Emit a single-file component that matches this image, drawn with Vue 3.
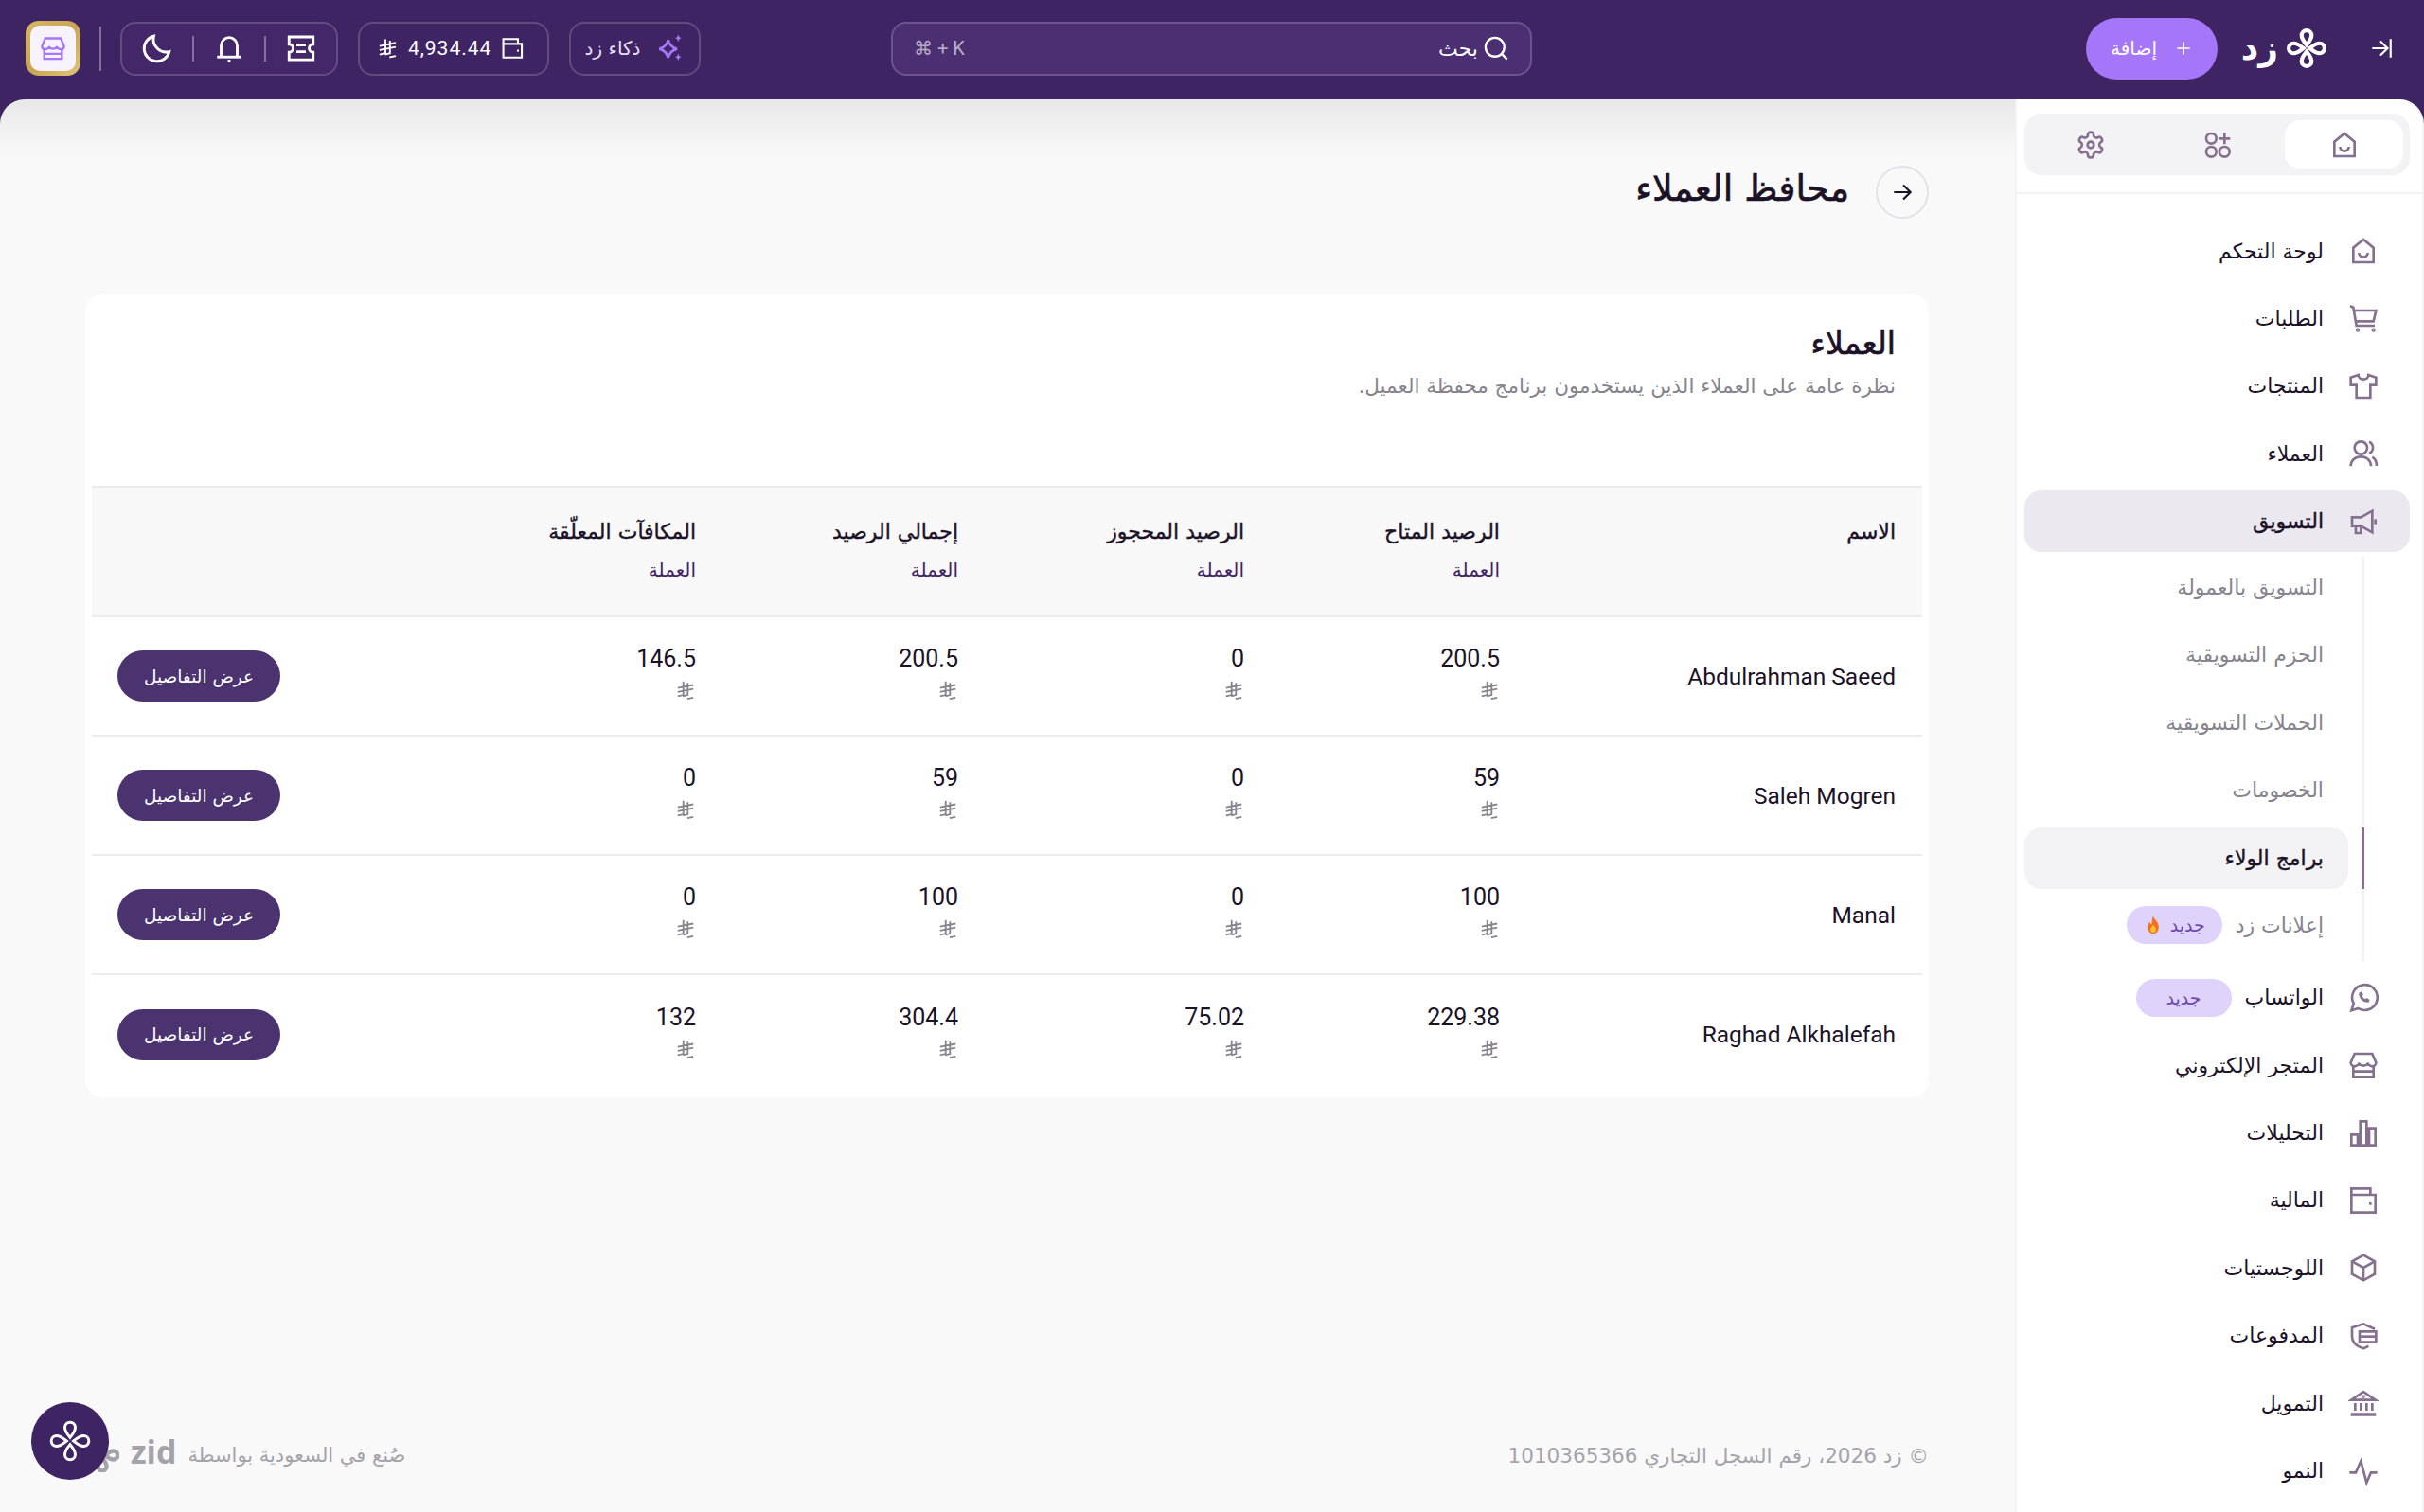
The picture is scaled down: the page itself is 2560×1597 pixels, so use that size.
<template>
  <div class="app" dir="rtl">
    <header class="topbar">
      <div class="brand">
        <svg class="collapse" viewBox="0 0 24 24"><path d="M21 3v18M3 12h14M11 5l7 7-7 7" /></svg>
        <svg class="flower" viewBox="-12 -12 24 24" v-html="flower"></svg>
        <span class="brand-name">زد</span>
        <button class="add-btn">
          <svg viewBox="0 0 24 24"><path d="M12 4v16M4 12h16" /></svg>
          <span>إضافة</span>
        </button>
      </div>

      <div class="search">
        <svg viewBox="0 0 24 24"><circle cx="11" cy="11" r="8.500" /><path d="M17.500 17.500 22 22" /></svg>
        <span class="search-label">بحث</span>
        <span class="shortcut" dir="ltr">⌘ + K</span>
      </div>

      <div class="tools">
        <div class="chip ai">
          <svg viewBox="0 0 24 24" v-html="icons.sparkles"></svg>
          <span>ذكاء زد</span>
        </div>
        <div class="chip balance">
          <svg class="wallet" viewBox="0 0 24 24" v-html="icons.wallet"></svg>
          <span class="amount">4,934.44</span>
          <svg class="sar" viewBox="0 0 24 24" v-html="sar"></svg>
        </div>
        <div class="chip quick">
          <svg viewBox="0 0 24 24" v-html="icons.ticket"></svg>
          <i></i>
          <svg viewBox="0 0 24 24" v-html="icons.bell"></svg>
          <i></i>
          <svg viewBox="0 0 24 24" v-html="icons.moon"></svg>
        </div>
        <span class="tool-sep"></span>
        <div class="store-btn">
          <span><svg viewBox="0 0 24 24" v-html="icons.store"></svg></span>
        </div>
      </div>
    </header>

    <div class="body">
      <aside class="sidebar">
        <div class="tabs-wrap">
          <div class="tabs">
            <button class="tab active"><svg viewBox="0 0 24 24" v-html="icons.home"></svg></button>
            <button class="tab"><svg viewBox="0 0 24 24" v-html="icons.apps"></svg></button>
            <button class="tab"><svg viewBox="0 0 24 24" v-html="icons.gear"></svg></button>
          </div>
        </div>

        <nav class="nav">
          <template v-for="item in nav" :key="item.label">
            <a class="nav-item" :class="{ open: item.sub }">
              <svg viewBox="0 0 24 24" v-html="icons[item.icon]"></svg>
              <span>{{ item.label }}</span>
              <em v-if="item.badge" class="badge wa">{{ item.badge }}</em>
            </a>
            <div v-if="item.sub" class="sub">
              <a v-for="s in item.sub" :key="s.label" class="sub-item" :class="{ active: s.active }">
                <span>{{ s.label }}</span>
                <em v-if="s.badge" class="badge">
                  {{ s.badge }}
                  <svg class="fire" viewBox="0 0 24 24">
                    <path fill="#f4701c" d="M12 1c1 4 7 7 7 14a7 8 0 0 1-14 0c0-3 1-5 3-7 0 2 1 3 2 3 1-3 0-7 2-10z" />
                    <path fill="#fbc531" d="M12 11c.5 2 3.500 4 3.500 6.500a3.500 4 0 0 1-7 0c0-2.500 3-4 3.500-6.500z" />
                  </svg>
                </em>
              </a>
            </div>
          </template>
        </nav>
      </aside>

      <main class="main">
        <div class="page-head">
          <button class="back">
            <svg viewBox="0 0 24 24"><path d="M4 12h16M13 5l7 7-7 7" /></svg>
          </button>
          <h1>محافظ العملاء</h1>
        </div>

        <section class="card">
          <div class="card-head">
            <h2>العملاء</h2>
            <p>نظرة عامة على العملاء الذين يستخدمون برنامج محفظة العميل.</p>
          </div>
          <table>
            <colgroup>
              <col style="width: 418px" />
              <col style="width: 270px" />
              <col style="width: 302px" />
              <col style="width: 277px" />
              <col style="width: 280px" />
              <col />
            </colgroup>
            <thead>
              <tr>
                <th class="name-th">الاسم</th>
                <th v-for="c in columns" :key="c">{{ c }}<small>العملة</small></th>
                <th></th>
              </tr>
            </thead>
            <tbody>
              <tr v-for="row in rows" :key="row.name">
                <td class="name">{{ row.name }}</td>
                <td v-for="(v, i) in row.values" :key="i" class="amount-cell">
                  <div class="val">{{ v }}</div>
                  <svg class="sar" viewBox="0 0 24 24" v-html="sar"></svg>
                </td>
                <td class="action"><button class="details">عرض التفاصيل</button></td>
              </tr>
            </tbody>
          </table>
        </section>

        <footer class="foot">
          <span class="copy">© زد 2026، رقم السجل التجاري 1010365366</span>
          <span class="made">
            صُنع في السعودية بواسطة
            <b dir="ltr">zid</b>
            <svg class="made-logo" viewBox="-12 -12 24 24" v-html="flower"></svg>
          </span>
        </footer>
        <button class="fab"><svg viewBox="-12 -12 24 24" v-html="flower"></svg></button>
      </main>
    </div>
  </div>
</template>

<script setup>
// petal repeated 4 times around the centre
const petal = 'M0-2C-1.200-3.500-3-5.500-3-7.800a3 3 0 0 1 6 0C3-5.500 1.200-3.500 0-2z'
const flower = [0, 90, 180, 270]
  .map((r) => `<path d="${petal}" transform="rotate(${r})" />`)
  .join('')

const sar = '<path d="M9.500 2v15.500L3 19M14.500 3.500v14L9 19M3 9.500l18-3.500M3 14l18-3.500M14 22l7-1.500" />'

const icons = {
  home: '<path d="M4 21V9.500L12 3l8 6.500V21z"/><path d="M8.500 13.500a3.500 3.500 0 0 0 7 0"/>',
  apps: '<circle cx="7" cy="7" r="4"/><circle cx="7" cy="17.500" r="4"/><circle cx="17.500" cy="17.500" r="4"/><path d="M17.500 2.500v9M13 7h9"/>',
  gear: '<path d="M12.220 2h-.44a2 2 0 0 0-2 2v.18a2 2 0 0 1-1 1.730l-.43.25a2 2 0 0 1-2 0l-.15-.08a2 2 0 0 0-2.730.73l-.22.38a2 2 0 0 0 .73 2.730l.15.1a2 2 0 0 1 1 1.720v.51a2 2 0 0 1-1 1.740l-.15.09a2 2 0 0 0-.73 2.730l.22.38a2 2 0 0 0 2.730.73l.15-.08a2 2 0 0 1 2 0l.43.25a2 2 0 0 1 1 1.730V20a2 2 0 0 0 2 2h.44a2 2 0 0 0 2-2v-.18a2 2 0 0 1 1-1.730l.43-.25a2 2 0 0 1 2 0l.15.08a2 2 0 0 0 2.730-.73l.22-.39a2 2 0 0 0-.73-2.730l-.15-.08a2 2 0 0 1-1-1.740v-.5a2 2 0 0 1 1-1.740l.15-.09a2 2 0 0 0 .73-2.730l-.22-.38a2 2 0 0 0-2.730-.73l-.15.08a2 2 0 0 1-2 0l-.43-.25a2 2 0 0 1-1-1.730V4a2 2 0 0 0-2-2z"/><circle cx="12" cy="12" r="2.500"/>',
  cart: '<path d="M1.500 2.500 4 3.500l2.500 14.500H21"/><path d="M5 6h17l-2 8.500H6.500"/><circle cx="7.500" cy="21.500" r=".6"/><circle cx="20" cy="21.500" r=".6"/>',
  shirt: '<path d="M8 3 2 5v6h4.500v10h11V11H22V5l-6-2c0 2-1.500 3.500-4 3.500S8 5 8 3z"/>',
  users: '<circle cx="10" cy="7.500" r="5"/><path d="M2 22c0-4.500 3.500-7.500 8-7.500s8 3 8 7.500"/><path d="M16.500 2.800a5 5 0 0 1 0 9.200"/><path d="M19 14.800c2 1 3.500 3.500 3.500 7"/>',
  megaphone: '<path d="M3 8.500h7l9-5v17l-9-5H3z"/><path d="M6 15.500V21h4v-5.500"/><path d="M21.500 10v4"/>',
  whatsapp: '<path d="M2.500 22l1.800-5.500A10 10 0 1 1 8 20.300z"/><path d="M8.500 8c-.5 4 3.500 8 7.500 7.500l1-2-2.500-1.500-1 1c-1-.5-2-1.500-2.500-2.500l1-1L10.500 7z" fill="currentColor" stroke="none"/>',
  store: '<path d="M5 3h14l3 7c0 2-1.500 3-3 3s-2.500-1-3.500-2c-1 1-2 1.500-3.500 1.500S9.500 12 8.500 11c-1 1-2 2-3.500 2s-3-1-3-3z"/><path d="M4 13v8.500h16V13M4 17h16"/>',
  bars: '<path d="M2.500 13h5v8.500h-5zM9.500 2.500h5v19h-5zM16.500 8h5v13.500h-5z"/>',
  wallet: '<path d="M2.500 7.500h19v14h-19z"/><path d="M2.500 7.500v-5h15v5"/><path d="M16.500 14.500h2"/>',
  box: '<path d="M12 2 21 7v10l-9 5-9-5V7z"/><path d="M3 7l9 5 9-5M12 12v10"/>',
  payments: '<path d="M21 6.500 12 2.500 3 5.500v7c0 4 3 7.500 9 9.500 1.500-.5 3-1.300 4-2"/><path d="M9 8.500h13v8.500H9z"/><path d="M9 12.500h13"/>',
  bank: '<path d="M2.500 9.500 12 3l9.500 6.500z"/><path d="M5.500 12v6M10 12v6M14.500 12v6M19 12v6"/><path d="M2 21h20" stroke-width="2.600"/><circle cx="12" cy="6.800" r=".4"/>',
  activity: '<path d="M1 13h5l4-9 4.500 17 3.500-8h5"/>',
  moon: '<path d="M21 14.500A9.500 9.500 0 0 1 9.500 3a9.500 9.500 0 1 0 11.500 11.500z"/>',
  bell: '<path d="M6 18V10a6 6 0 0 1 12 0v8"/><path d="M3 18.500h18"/><path d="M11 21.500h2"/>',
  ticket: '<path d="M3 3.500h18v5.500a3 3 0 0 0 0 6v5.500H3V15a3 3 0 0 0 0-6z"/><path d="M8.500 9.500h7M8.500 14.500h7"/>',
  sparkles: '<path d="M11 5.500c1 4 3 6 7 7-4 1-6 3-7 7-1-4-3-6-7-7 4-1 6-3 7-7z"/><path fill="currentColor" stroke="none" d="M19 1c.4 1.800 1 2.500 2.500 3-1.500.5-2.100 1.200-2.500 3-.4-1.800-1-2.500-2.500-3 1.500-.5 2.100-1.200 2.500-3zM19 16c.4 1.800 1 2.500 2.500 3-1.500.5-2.100 1.200-2.500 3-.4-1.800-1-2.500-2.500-3 1.500-.5 2.100-1.200 2.500-3z"/>',
}

const nav = [
  { label: 'لوحة التحكم', icon: 'home' },
  { label: 'الطلبات', icon: 'cart' },
  { label: 'المنتجات', icon: 'shirt' },
  { label: 'العملاء', icon: 'users' },
  {
    label: 'التسويق',
    icon: 'megaphone',
    sub: [
      { label: 'التسويق بالعمولة' },
      { label: 'الحزم التسويقية' },
      { label: 'الحملات التسويقية' },
      { label: 'الخصومات' },
      { label: 'برامج الولاء', active: true },
      { label: 'إعلانات زد', badge: 'جديد' },
    ],
  },
  { label: 'الواتساب', icon: 'whatsapp', badge: 'جديد' },
  { label: 'المتجر الإلكتروني', icon: 'store' },
  { label: 'التحليلات', icon: 'bars' },
  { label: 'المالية', icon: 'wallet' },
  { label: 'اللوجستيات', icon: 'box' },
  { label: 'المدفوعات', icon: 'payments' },
  { label: 'التمويل', icon: 'bank' },
  { label: 'النمو', icon: 'activity' },
]

const columns = ['الرصيد المتاح', 'الرصيد المحجوز', 'إجمالي الرصيد', 'المكافآت المعلّقة']

const rows = [
  { name: 'Abdulrahman Saeed', values: ['200.5', '0', '200.5', '146.5'] },
  { name: 'Saleh Mogren', values: ['59', '0', '59', '0'] },
  { name: 'Manal', values: ['100', '0', '100', '0'] },
  { name: 'Raghad Alkhalefah', values: ['229.38', '75.02', '304.4', '132'] },
]
</script>

<style scoped>
.app {
  width: 2560px;
  height: 1597px;
  overflow: hidden;
  background: #3f2463;
  display: flex;
  flex-direction: column;
  font-family: "DejaVu Sans", Roboto, sans-serif;
  color: #1c1228;
}

button {
  font: inherit;
  border: none;
  background: none;
  padding: 0;
}

svg {
  fill: none;
  stroke: currentColor;
  stroke-width: 2;
}

/* top bar */
.topbar {
  height: 105px;
  flex: none;
  box-sizing: border-box;
  display: flex;
  align-items: center;
  padding: 0 32px 3px 27px;
  color: #fff;
}

.brand {
  display: flex;
  align-items: center;
}

.collapse {
  width: 26px;
  height: 26px;
}

.flower {
  width: 42px;
  height: 42px;
  margin-right: 45px;
  stroke-width: 2.400;
}

.brand-name {
  font-size: 36px;
  font-weight: 700;
  margin-right: 9px;
  width: 36px;
  line-height: 40px;
}

.add-btn {
  width: 139px;
  height: 65px;
  margin-right: 28px;
  border-radius: 33px;
  background: #a576f7;
  color: #fff;
  font-size: 20px;
  display: flex;
  align-items: center;
  justify-content: center;
  gap: 18px;
}

.add-btn svg {
  width: 20px;
  height: 20px;
}

.search {
  width: 677px;
  height: 57px;
  margin-right: 585px;
  box-sizing: border-box;
  padding: 0 22px;
  display: flex;
  align-items: center;
  gap: 5px;
  border: 2px solid rgba(255, 255, 255, .18);
  border-radius: 16px;
  background: #4b2f72;
  font-size: 22px;
}

.search svg {
  width: 28px;
  height: 28px;
}

.shortcut {
  margin-right: auto;
  font: 20px Roboto, sans-serif;
  color: rgba(255, 255, 255, .6);
}

.tools {
  margin-right: auto;
  display: flex;
  align-items: center;
}

.chip {
  height: 57px;
  box-sizing: border-box;
  border: 2px solid rgba(255, 255, 255, .18);
  border-radius: 16px;
  display: flex;
  align-items: center;
}

.ai {
  width: 139px;
  justify-content: center;
  gap: 15px;
  font-size: 20px;
  color: #eadffc;
}

.ai svg {
  width: 32px;
  height: 32px;
  color: #a576f7;
}

.balance {
  width: 202px;
  margin-right: 21px;
  padding: 0 24px 0 18px;
  gap: 10px;
}

.balance .wallet {
  width: 28px;
  height: 28px;
}

.amount {
  font: 400 21px Roboto, sans-serif;
  letter-spacing: 1px;
}

.balance .sar {
  width: 26px;
  height: 26px;
  color: #fff;
}

.quick {
  width: 230px;
  margin-right: 21px;
  background: #432768;
  justify-content: center;
  gap: 20px;
}

.quick svg {
  width: 34px;
  height: 34px;
}

.quick i {
  width: 2px;
  height: 27px;
  background: rgba(255, 255, 255, .35);
}

.tool-sep {
  width: 2px;
  height: 47px;
  margin: 0 20px;
  background: rgba(255, 255, 255, .35);
}

.store-btn {
  width: 58px;
  height: 58px;
  padding: 5px;
  box-sizing: border-box;
  border-radius: 14px;
  background: linear-gradient(135deg, #d8b863, #c8a550 50%, #e0c67a);
}

.store-btn span {
  height: 100%;
  display: flex;
  align-items: center;
  justify-content: center;
  border-radius: 10px;
  background: #f6f3ff;
  color: #a576f7;
}

.store-btn svg {
  width: 28px;
  height: 28px;
}

.body {
  flex: 1;
  display: flex;
  min-height: 0;
}

/* sidebar */
.sidebar {
  width: 432px;
  flex: none;
  box-sizing: border-box;
  background: #fff;
  border-left: 2px solid #f3f3f5;
  border-right: 2px solid #f3f3f5;
  border-top-right-radius: 26px;
  color: #86708f;
}

.tabs-wrap {
  height: 100px;
  padding: 15px 13px 0 8px;
  box-sizing: border-box;
  border-bottom: 2px solid #f3f3f5;
}

.tabs {
  height: 65px;
  box-sizing: border-box;
  padding: 7px;
  display: flex;
  gap: 9px;
  border-radius: 18px;
  background: #f3f3f5;
}

.tab {
  flex: 1;
  border-radius: 16px;
  color: #86708f;
  display: flex;
  align-items: center;
  justify-content: center;
}

.tab.active {
  background: #fff;
}

.tab svg {
  width: 32px;
  height: 32px;
}

.nav {
  padding: 27.500px 13px 0 8px;
  display: flex;
  flex-direction: column;
  gap: 6.400px;
}

.nav-item {
  height: 65px;
  padding: 0 33px 0 0;
  display: flex;
  align-items: center;
  border-radius: 18px;
  font-size: 22px;
  color: #1c1228;
}

.nav-item svg {
  width: 32px;
  height: 32px;
  flex: none;
  margin-left: 26px;
  color: #86708f;
}

.nav-item.open {
  background: #ebe9ef;
  -webkit-text-stroke: .4px currentColor;
}

.sub {
  position: relative;
  align-self: flex-end;
  width: 342px;
  margin-top: -1.500px;
  padding-bottom: 5px;
  display: flex;
  flex-direction: column;
  gap: 6.400px;
}

.sub::before {
  content: "";
  position: absolute;
  top: 0;
  bottom: 0;
  right: -17px;
  width: 3px;
  background: #f3f3f5;
}

.sub-item {
  position: relative;
  height: 65px;
  padding-right: 26px;
  display: flex;
  align-items: center;
  gap: 14px;
  border-radius: 18px;
  font-size: 22px;
  color: #87848e;
}

.sub-item.active {
  background: #f3f3f5;
  color: #1c1228;
  -webkit-text-stroke: .4px currentColor;
}

.sub-item.active::before {
  content: "";
  position: absolute;
  top: 0;
  bottom: 0;
  right: -17px;
  width: 3px;
  background: #86708f;
}

.badge {
  width: 101px;
  height: 40px;
  display: flex;
  align-items: center;
  justify-content: center;
  gap: 8px;
  border-radius: 20px;
  background: #e0d3fb;
  color: #6d49ad;
  font-size: 19px;
  font-style: normal;
}

.badge.wa {
  margin-right: 14px;
}

.fire {
  width: 20px;
  height: 22px;
  stroke: none;
}

/* main column */
.main {
  flex: 1;
  position: relative;
  min-width: 0;
  box-sizing: border-box;
  padding: 70px 91px 42px 90px;
  display: flex;
  flex-direction: column;
  background: linear-gradient(#e8e8e9, #f9f9f9 60px);
  border-top-left-radius: 26px;
}

.page-head {
  display: flex;
  align-items: center;
  gap: 28px;
  height: 56px;
}

.page-head h1 {
  margin: 0 0 8px;
  font-size: 38px;
  font-weight: 400;
  -webkit-text-stroke: .7px currentColor;
}

.back {
  width: 56px;
  height: 56px;
  display: flex;
  align-items: center;
  justify-content: center;
  border: 2px solid #e3e2e8;
  border-radius: 50%;
  color: #1c1228;
}

.back svg {
  width: 26px;
  height: 26px;
}

.card {
  margin-top: 80px;
  padding: 0 7px;
  height: 848px;
  box-sizing: border-box;
  background: #fff;
  border-radius: 18px;
}

.card-head {
  height: 202px;
  box-sizing: border-box;
  padding: 30px 28px 0;
}

.card-head h2 {
  margin: 0;
  font-size: 33px;
  font-weight: 400;
  line-height: 44px;
  -webkit-text-stroke: .7px currentColor;
}

.card-head p {
  margin: 6px 0 0;
  font-size: 21.500px;
  line-height: 34px;
  color: #87848e;
}

table {
  width: 100%;
  table-layout: fixed;
  border-collapse: collapse;
  text-align: right;
}

th {
  height: 137px;
  padding: 34px 28px 0 0;
  background: #f8f8f8;
  border-top: 2px solid #ececee;
  border-bottom: 2px solid #ececee;
  font-size: 22px;
  font-weight: 400;
  vertical-align: top;
  box-sizing: border-box;
  -webkit-text-stroke: .4px currentColor;
}

th small {
  display: block;
  margin-top: 16px;
  font-size: 20px;
  color: #3f2463;
  -webkit-text-stroke: 0;
}

td {
  height: 126px;
  padding: 0 28px 0 0;
  border-bottom: 2px solid #ececee;
  box-sizing: border-box;
}

tbody tr:last-child td {
  border-bottom: none;
}

.amount-cell {
  padding-bottom: 8px;
}

.name {
  font: 24.500px Roboto, sans-serif;
}

.val {
  font: 25px/32px Roboto, sans-serif;
}

td .sar {
  display: block;
  width: 22px;
  height: 22px;
  margin-top: 6px;
  color: #87848e;
  stroke-width: 2;
}

.action {
  padding: 0 0 0 27px;
  text-align: left;
}

.details {
  width: 172px;
  height: 54px;
  border-radius: 27px;
  background: #4b3370;
  color: #fff;
  font-size: 18.500px;
}

/* footer */
.foot {
  margin-top: auto;
  height: 36px;
  display: flex;
  align-items: center;
  justify-content: space-between;
  font-size: 21.500px;
  color: #a5a3aa;
}

.made {
  display: flex;
  align-items: center;
  gap: 12px;
  font-size: 21px;
}

.made b {
  font: 700 34px/36px "Open Sans", sans-serif;
  margin-top: -8px;
}

.made-logo {
  width: 36px;
  height: 36px;
  stroke-width: 3;
}

.fab {
  position: absolute;
  left: 33px;
  bottom: 34px;
  width: 82px;
  height: 82px;
  display: flex;
  align-items: center;
  justify-content: center;
  border-radius: 50%;
  background: #3f2463;
  color: #fff;
}

.fab svg {
  width: 44px;
  height: 44px;
  stroke-width: 1.600;
}
</style>

<style>
html,
body {
  margin: 0;
  background: #3f2463;
}
</style>
